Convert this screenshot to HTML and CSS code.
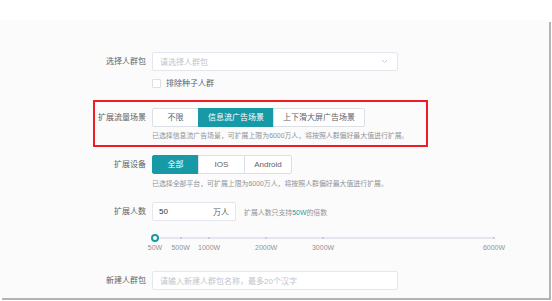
FILE: index.html
```html
<!DOCTYPE html>
<html lang="zh">
<head>
<meta charset="utf-8">
<link rel="stylesheet" href="styles.css">
</head>
<body>
<div class="top"></div>
<div class="panel">
  <div class="row row-select">
    <div class="label">选择人群包</div>
    <div class="field">
      <div class="input wide">
        <span class="ph">请选择人群包</span>
        <svg class="chev" width="7" height="5" viewBox="0 0 7 5"><path d="M1 1l2.5 2.5L6 1" fill="none" stroke="#c0c4cc" stroke-width="0.9"/></svg>
      </div>
    </div>
  </div>
  <div class="row row-check">
    <div class="label"></div>
    <div class="field">
      <div class="check"><span class="box"></span><span>排除种子人群</span></div>
    </div>
  </div>
  <div class="highlight">
    <div class="row">
      <div class="label short">扩展流量场景</div>
      <div class="field">
        <div class="seg">
          <span class="btn">不限</span><span class="btn active">信息流广告场景</span><span class="btn">上下滑大屏广告场景</span>
        </div>
        <div class="hint">已选择信息流广告场景，可扩展上限为6000万人，将按照人群偏好最大值进行扩展。</div>
      </div>
    </div>
  </div>
  <div class="row row-device">
    <div class="label">扩展设备</div>
    <div class="field">
      <div class="seg">
        <span class="btn active">全部</span><span class="btn">IOS</span><span class="btn">Android</span>
      </div>
      <div class="hint">已选择全部平台，可扩展上限为6000万人，将按照人群偏好最大值进行扩展。</div>
    </div>
  </div>
  <div class="row row-num">
    <div class="label">扩展人数</div>
    <div class="field inline">
      <div class="input num"><span class="val">50</span><span class="unit">万人</span></div>
      <span class="tip">扩展人数只支持<b>50W</b>的倍数</span>
    </div>
  </div>
  <div class="slider">
    <div class="track"></div>
    <span class="dot" style="left:7.563%"></span>
    <span class="dot" style="left:15.966%"></span>
    <span class="dot" style="left:32.773%"></span>
    <span class="dot" style="left:49.58%"></span>
    <span class="dot" style="left:100%"></span>
    <span class="handle" style="left:0%"></span>
    <span class="mark" style="left:0%">50W</span>
    <span class="mark" style="left:7.563%">500W</span>
    <span class="mark" style="left:15.966%">1000W</span>
    <span class="mark" style="left:32.773%">2000W</span>
    <span class="mark" style="left:49.58%">3000W</span>
    <span class="mark" style="left:100%">6000W</span>
  </div>
  <div class="row row-name">
    <div class="label">新建人群包</div>
    <div class="field">
      <div class="input wide"><span class="ph">请输入新建人群包名称，最多20个汉字</span></div>
    </div>
  </div>
</div>
</body>
</html>
```
FILE: styles.css
```css
* { box-sizing: border-box; }
html, body { margin: 0; padding: 0; background: #fff; }
body {
  font-family: "Liberation Sans", "Noto Sans CJK SC", sans-serif;
  font-size: 8px;
  color: #5a5e66;
  width: 552px;
  height: 301px;
  overflow: hidden;
}
.top { height: 20px; }
.panel {
  width: 549px;
  height: 278px;
  background: #fbfbfb;
  box-shadow: 2px 2px 0 #b4b4b4;
  display: flex;
  flex-direction: column;
  padding-top: 32px;
}
.row { display: flex; align-items: flex-start; }
.label {
  width: 146px;
  flex: none;
  text-align: right;
  line-height: 19px;
  color: #606266;
}
.label.short { width: 51px; }
.field { margin-left: 6px; display: flex; flex-direction: column; }
.field.inline { flex-direction: row; align-items: center; }
.input {
  height: 19px;
  border: 1px solid #e4e7ed;
  border-radius: 2px;
  background: #fff;
  display: flex;
  align-items: center;
  padding: 0 7px;
}
.input.wide { width: 246px; }
.ph { color: #c0c4cc; flex: 1; }
.chev { margin-right: 2px; }
.row-check { margin-top: 8px; }
.check { display: flex; align-items: center; height: 9px; line-height: 9px; color: #606266; }
.box {
  width: 9px; height: 9px;
  border: 1px solid #dcdfe6;
  border-radius: 1px;
  background: #fff;
  margin-right: 5px;
}
.highlight {
  margin-top: 12px;
  margin-left: 93px;
  width: 335px;
  height: 47px;
  border: 2px solid #ee1c24;
  padding-top: 6px;
}
.seg { display: flex; }
.btn {
  height: 19px;
  line-height: 17px;
  min-width: 47px;
  padding: 0 9px;
  text-align: center;
  border: 1px solid #dcdfe6;
  margin-left: -1px;
  background: #fff;
  color: #606266;
}
.btn:first-child { margin-left: 0; border-radius: 2px 0 0 2px; }
.btn:last-child { border-radius: 0 2px 2px 0; min-width: 48px; }
.btn.active { background: #179aa6; border-color: #179aa6; color: #fff; }
.hint {
  font-size: 6.9px;
  line-height: 9px;
  margin-top: 4px;
  color: #909399;
  white-space: nowrap;
}
.row-device { margin-top: 8px; }
.row-device .hint { margin-top: 5px; }
.row-num { margin-top: 14px; }
.input.num { width: 84px; padding: 0 6px; justify-content: space-between; color: #303133; }
.unit { color: #606266; }
.tip { margin-left: 8px; font-size: 6.9px; color: #909399; }
.tip b { color: #179aa6; font-weight: normal; }
.slider {
  position: relative;
  margin-top: 13px;
  margin-left: 155px;
  width: 339px;
  height: 20px;
}
.track {
  position: absolute;
  left: 0; right: 0; top: 3px;
  height: 2px;
  background: #e4e7ed;
}
.dot {
  position: absolute;
  top: 3px;
  width: 2px; height: 2px;
  margin-left: -1px;
  border-radius: 50%;
  background: #b8c7d6;
}
.handle {
  position: absolute;
  top: 0;
  width: 8px; height: 8px;
  margin-left: -4px;
  border: 2px solid #179aa6;
  border-radius: 50%;
  background: #fff;
}
.mark {
  position: absolute;
  top: 10px;
  font-size: 7px;
  line-height: 8px;
  color: #909399;
  transform: translateX(-50%);
  white-space: nowrap;
}
.row-name { margin-top: 17px; }
```
